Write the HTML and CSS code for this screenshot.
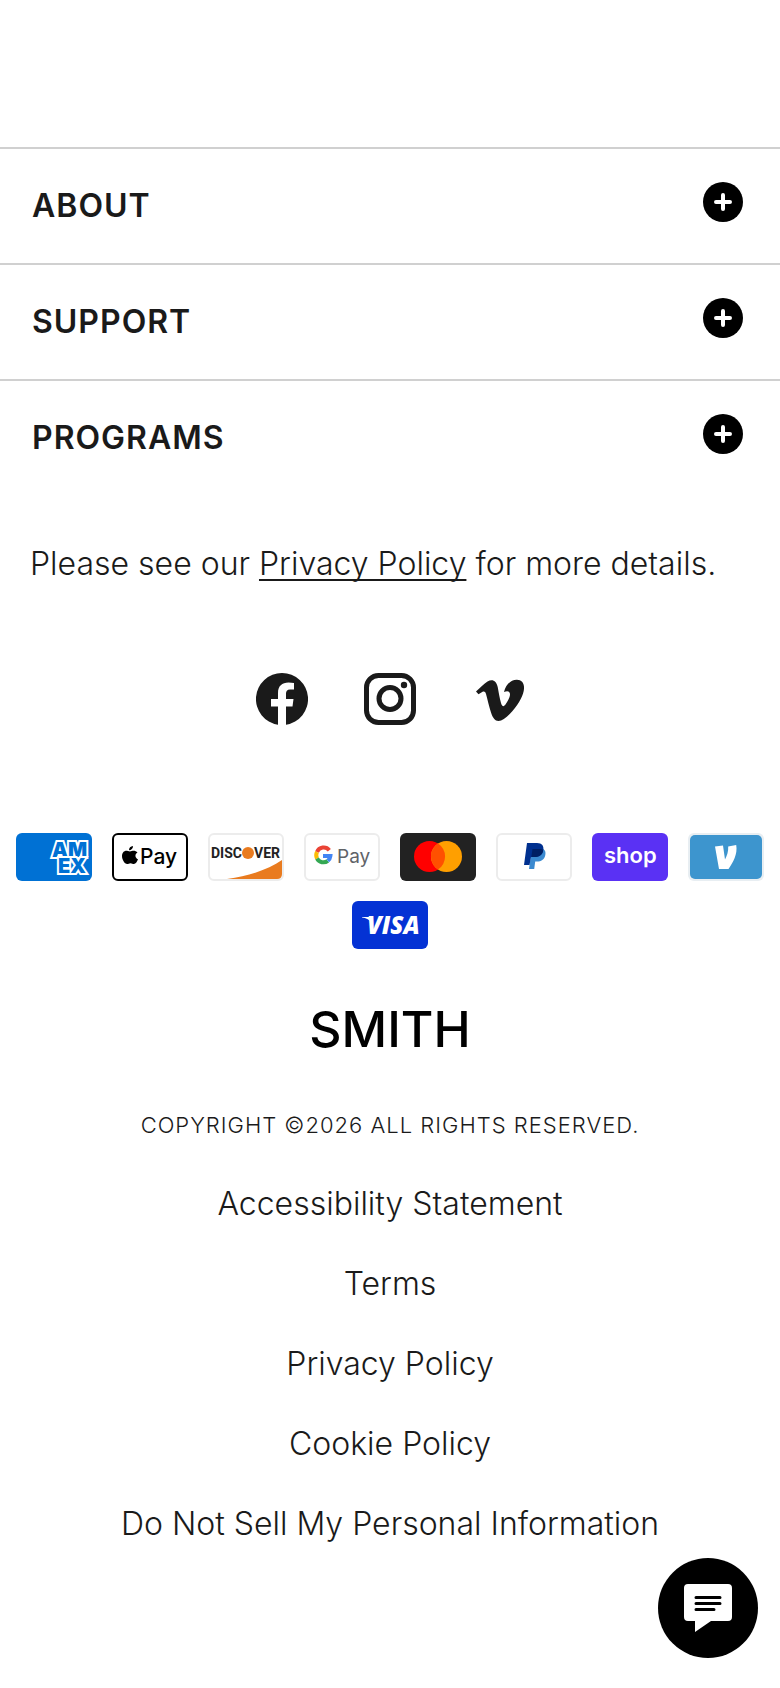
FILE: index.html
```
<!DOCTYPE html>
<html lang="en">
<head>
    <meta charset="utf-8">
    <meta name="viewport" content="width=device-width, initial-scale=1">
    <title>Smith Optics</title>
    <link rel="stylesheet" href="styles.css">
</head>
<body>
    <footer class="footer">
        <div class="footer-menu">
            <h2 class="menu-item">
                <button type="button" aria-expanded="false">ABOUT
                    <svg class="plus" viewBox="0 0 40 40" aria-hidden="true"><circle cx="20" cy="20" r="20"/><path d="M20 13v14M13 20h14"/></svg>
                </button>
            </h2>
            <h2 class="menu-item">
                <button type="button" aria-expanded="false">SUPPORT
                    <svg class="plus" viewBox="0 0 40 40" aria-hidden="true"><circle cx="20" cy="20" r="20"/><path d="M20 13v14M13 20h14"/></svg>
                </button>
            </h2>
            <h2 class="menu-item">
                <button type="button" aria-expanded="false">PROGRAMS
                    <svg class="plus" viewBox="0 0 40 40" aria-hidden="true"><circle cx="20" cy="20" r="20"/><path d="M20 13v14M13 20h14"/></svg>
                </button>
            </h2>
        </div>

        <p class="privacy">Please see our <a href="#">Privacy Policy</a> for more details.</p>

        <div class="social">
            <a href="#" aria-label="Facebook">
                <svg viewBox="0 0 52 52"><path d="M26 0a26 26 0 0 0-4 51.700V33.500h-7V26h7v-6c0-7 4-10.500 10.500-10.500 2 0 4 .2 5.500.5v6.500h-4c-3 0-4 1.800-4 4V26h7.500l-1 7.500H30v18.200A26 26 0 0 0 26 0z"/></svg>
            </a>
            <a href="#" aria-label="Instagram">
                <svg viewBox="0 0 52 52"><rect class="line" x="2.500" y="2.500" width="47" height="47" rx="12"/><circle class="line" cx="26" cy="25.500" r="11"/><circle cx="40" cy="12" r="3.200"/></svg>
            </a>
            <a href="#" aria-label="Vimeo">
                <svg viewBox="-2 0 52 52"><path d="M2 18.500C6 15 10 10.500 13.500 8.500c5-3 9-.5 10.200 5.500 1 5 1.800 11 3.300 16 1.200 4 2.800 4 4.800 1 2.200-3.200 4.200-7 4.200-9.500 0-3.300-2.500-3.800-6-2.500C32 11 37.500 6.500 43 6.700c5 .2 7.300 3.300 7 9-.3 6-4.500 14-11.500 22.300C33 44.500 28.500 48 24.500 48c-3.500 0-5.700-3-7.500-8.500-2-6.500-3.500-13-5-18.500-.8-2.500-2-3-3.800-2l-3.700 2.300z"/></svg>
            </a>
        </div>

        <ul class="payments">
            <li>
                <svg viewBox="0 0 76 48" role="img" aria-label="American Express">
                    <rect width="76" height="48" rx="6" fill="#0071d4"/>
                    <text class="amex"><tspan x="36" y="24">AM</tspan><tspan x="42" y="40">EX</tspan></text>
                </svg>
            </li>
            <li>
                <svg viewBox="0 0 76 48" role="img" aria-label="Apple Pay">
                    <rect x="1" y="1" width="74" height="46" rx="5" fill="#fff" stroke="#000" stroke-width="2"/>
                    <path d="M19 14c-2.400.2-4.200 2-4 4.300 2.300 0 4.100-2 4-4.300zM23.500 20.500c-1.500-1.800-4-2.200-5.700-1.500-1.500.6-2.300.6-3.800 0-3.300-1.100-6 1.300-6 5 0 3.600 2.500 8 5.200 8 1.200 0 1.800-.8 3.300-.8 1.600 0 2.100.8 3.400.8 1.800 0 3.400-2.600 4.100-4.700-3.100-1.500-3.500-5-.5-6.800z" transform="translate(2 -1)"/>
                    <text x="28" y="31" class="inter" font-size="21" font-weight="500">Pay</text>
                </svg>
            </li>
            <li>
                <svg viewBox="0 0 76 48" role="img" aria-label="Discover">
                    <rect x="1" y="1" width="74" height="46" rx="5" fill="#fff" stroke="#ececec" stroke-width="2"/>
                    <path d="M19 46C42 43 61 36 74 27v14q0 5-5 5z" fill="#e97b1f"/>
                    <g class="discover"><text x="3" y="25">DISC</text><text x="46" y="25">VER</text></g>
                    <circle cx="40" cy="20" r="6" fill="#e97b1f"/>
                </svg>
            </li>
            <li>
                <svg viewBox="0 0 76 48" role="img" aria-label="Google Pay">
                    <rect x="1" y="1" width="74" height="46" rx="5" fill="#fff" stroke="#ececec" stroke-width="2"/>
                    <g fill="none" stroke-width="4">
                        <path d="M25.300 17.200A7.200 7.200 0 0 0 13 19" stroke="#ea4335"/>
                        <path d="M13 19a7.200 7.200 0 0 0 0 6.500" stroke="#fbbc04"/>
                        <path d="M13 25.500a7.200 7.200 0 0 0 10.800 2.300" stroke="#34a853"/>
                        <path d="M23.800 27.800a7.200 7.200 0 0 0 2.600-4.800H19" stroke="#4285f4"/>
                    </g>
                    <text x="33" y="30" class="inter" font-size="19" font-weight="400" fill="#5f6368">Pay</text>
                </svg>
            </li>
            <li>
                <svg viewBox="0 0 76 48" role="img" aria-label="Mastercard">
                    <rect width="76" height="48" rx="6" fill="#222"/>
                    <circle cx="29.500" cy="23.500" r="15.500" fill="#f00"/>
                    <circle cx="46.500" cy="23.500" r="15.500" fill="#ff9f00"/>
                    <path d="M38 10.500a15.500 15.500 0 0 1 0 26 15.500 15.500 0 0 1 0-26z" fill="#ff5000"/>
                </svg>
            </li>
            <li>
                <svg viewBox="0 0 76 48" role="img" aria-label="PayPal">
                    <rect x="1" y="1" width="74" height="46" rx="5" fill="#fff" stroke="#ececec" stroke-width="2"/>
                    <path d="M36 15h9c4 1 5.200 4 4.200 7.500-1 4-4 6-8.200 6h-1.800L38.200 36H33z" fill="#3b8ad0"/>
                    <path d="M31 10h10c5 0 7.200 3 6.200 7.500-.9 4.500-4.200 6.500-9.200 6.500h-3l-1.500 8H28z" fill="#00308f"/>
                    <path d="M36.500 16h8c2 0 2.600 1 2.600 2-1 4-4 6-9 6h-2.800z" fill="#001f63"/>
                </svg>
            </li>
            <li>
                <svg viewBox="0 0 76 48" role="img" aria-label="Shop Pay">
                    <rect width="76" height="48" rx="6" fill="#5a31f4"/>
                    <text x="12" y="30" class="inter" font-size="22" font-weight="600" fill="#fff">shop</text>
                </svg>
            </li>
            <li>
                <svg viewBox="0 0 76 48" role="img" aria-label="Venmo">
                    <rect width="76" height="48" rx="6" fill="#e8eef2"/>
                    <rect x="2" y="2" width="72" height="44" rx="5" fill="#3d95ce"/>
                    <path d="M27 13.500l8-1 2 14c2-4 3.500-8 3.200-13l8-1.500c1.700 9-3.200 17.500-7.700 24H31z" fill="#fff"/>
                </svg>
            </li>
            <li>
                <svg viewBox="0 0 76 48" role="img" aria-label="Visa">
                    <rect width="76" height="48" rx="6" fill="#0432d4"/>
                    <path d="M10 16h7l2 5q-3-4-9-4.500z" fill="#fff"/>
                    <text x="15" y="33" class="visa">VISA</text>
                </svg>
            </li>
        </ul>

        <a class="logo" href="#">SMITH</a>

        <p class="copyright">COPYRIGHT ©2026 ALL RIGHTS RESERVED.</p>

        <nav class="legal">
            <a href="#">Accessibility Statement</a>
            <a href="#">Terms</a>
            <a href="#">Privacy Policy</a>
            <a href="#">Cookie Policy</a>
            <a href="#">Do Not Sell My Personal Information</a>
        </nav>
    </footer>

    <button type="button" class="chat" aria-label="Chat">
        <svg viewBox="0 0 100 100"><path class="bubble" d="M30 26h40q4 0 4 4v29q0 4-4 4H53L37 74V63h-7q-4 0-4-4V30q0-4 4-4z"/><path class="rows" d="M38 39.500h24M38 45.500h24M38 51.500h18"/></svg>
    </button>
</body>
</html>
```
FILE: styles.css
```
:root {
    --text: #1a1a1a;
    --line: #d0d0d0;
}

* {
    box-sizing: border-box;
}

body {
    margin: 0;
    background-color: white;
    color: var(--text);
    font-family: Inter, "Liberation Sans", sans-serif;
    font-size: 32px;
    font-weight: 300;
    line-height: 48px;
}

a {
    color: inherit;
}

.footer {
    padding: 147px 0 120px;
}

/* accordion */
.menu-item {
    margin: 0;
    border-top: 2px solid var(--line);
    font-size: 32px;
}
.menu-item button {
    display: flex;
    justify-content: space-between;
    align-items: center;
    width: 100%;
    height: 114px;
    padding: 0 37px 0 32px;
    border: 0;
    background: none;
    color: inherit;
    font: inherit;
    font-weight: 600;
    letter-spacing: 1px;
    text-align: left;
    cursor: pointer;
}
.plus {
    width: 40px;
    height: 40px;
    margin-bottom: 8px;
}
.plus path {
    stroke: white;
    stroke-width: 4;
    stroke-linecap: round;
}

.privacy {
    margin: 45px 30px 85px;
}
.privacy a {
    text-decoration-thickness: 2px;
    text-underline-offset: 4px;
    text-decoration-skip-ink: none;
}

.social {
    display: flex;
    justify-content: center;
    gap: 56px;
}
.social a, .social svg {
    display: block;
    width: 52px;
    height: 52px;
}
.social svg {
    fill: var(--text);
}
.social .line {
    fill: none;
    stroke: var(--text);
    stroke-width: 5;
}

/* payment cards */
.payments {
    display: flex;
    flex-wrap: wrap;
    justify-content: center;
    gap: 20px;
    margin: 108px 0 0;
    padding: 0 16px;
    list-style: none;
}
.payments li, .payments svg {
    display: block;
    width: 76px;
    height: 48px;
}
.inter {
    font-family: Inter, sans-serif;
}
.amex {
    font: 900 20px Inter, sans-serif;
    fill: #0071d4;
    stroke: white;
    stroke-width: 4px;
    paint-order: stroke;
}
.discover {
    font: 700 14px Roboto, sans-serif;
    fill: #222;
}
.visa {
    font: italic 800 24px "Open Sans", sans-serif;
    fill: white;
}

.logo {
    display: block;
    width: max-content;
    margin: 48px auto 0;
    color: black;
    font-size: 50px;
    font-weight: 500;
    line-height: 64px;
    text-decoration: none;
}

.copyright {
    margin: 40px 0 0;
    font-size: 22px;
    letter-spacing: 1px;
    text-align: center;
}

.legal {
    display: flex;
    flex-direction: column;
    align-items: center;
    gap: 32px;
    margin-top: 31px;
}
.legal a {
    text-decoration: none;
}

.chat {
    position: fixed;
    right: 22px;
    bottom: 30px;
    width: 100px;
    height: 100px;
    padding: 0;
    border: 0;
    border-radius: 50%;
    background-color: black;
    cursor: pointer;
}
.chat svg {
    display: block;
}
.bubble {
    fill: white;
}
.rows {
    stroke: black;
    stroke-width: 3;
    stroke-linecap: round;
}
```
